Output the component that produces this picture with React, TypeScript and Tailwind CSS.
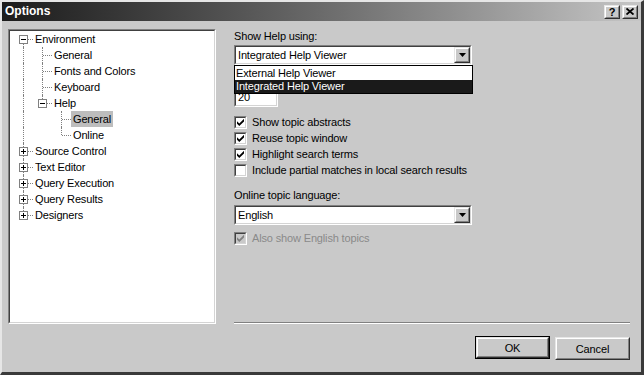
import React from "react";

type Row = {
  label: string;
  guides: ("line" | "none")[];
  conn: "first" | "tee" | "corner";
  box?: "+" | "-";
  selected?: boolean;
};

const rows: Row[] = [
  { label: "Environment", guides: [], conn: "first", box: "-" },
  { label: "General", guides: ["line"], conn: "tee" },
  { label: "Fonts and Colors", guides: ["line"], conn: "tee" },
  { label: "Keyboard", guides: ["line"], conn: "tee" },
  { label: "Help", guides: ["line"], conn: "corner", box: "-" },
  { label: "General", guides: ["line", "none"], conn: "tee", selected: true },
  { label: "Online", guides: ["line", "none"], conn: "corner" },
  { label: "Source Control", guides: [], conn: "tee", box: "+" },
  { label: "Text Editor", guides: [], conn: "tee", box: "+" },
  { label: "Query Execution", guides: [], conn: "tee", box: "+" },
  { label: "Query Results", guides: [], conn: "tee", box: "+" },
  { label: "Designers", guides: [], conn: "corner", box: "+" },
];

function ExpandBox({ kind }: { kind: "+" | "-" }) {
  return (
    <div className="absolute left-[5px] top-[4px] w-[9px] h-[9px] bg-white border border-[#808080] flex items-center justify-center">
      <div className="relative w-[5px] h-[5px]">
        <div className="absolute left-0 top-[2px] w-[5px] h-[1px] bg-black" />
        {kind === "+" && <div className="absolute left-[2px] top-0 w-[1px] h-[5px] bg-black" />}
      </div>
    </div>
  );
}

function TreeRow({ row }: { row: Row }) {
  return (
    <div className="flex h-[16px] items-center">
      {row.guides.map((g, i) => (
        <div key={i} className="relative w-[19px] h-[16px] shrink-0">
          {g === "line" && (
            <div className="absolute left-[9px] top-0 bottom-0 border-l border-dotted border-[#808080]" />
          )}
        </div>
      ))}
      <div className="relative w-[19px] h-[16px] shrink-0">
        {row.conn === "tee" && (
          <div className="absolute left-[9px] top-0 bottom-0 border-l border-dotted border-[#808080]" />
        )}
        {row.conn === "first" && (
          <div className="absolute left-[9px] top-[8px] bottom-0 border-l border-dotted border-[#808080]" />
        )}
        {row.conn === "corner" && (
          <div className="absolute left-[9px] top-0 h-[8px] border-l border-dotted border-[#808080]" />
        )}
        <div className="absolute left-[10px] right-0 top-[8px] border-t border-dotted border-[#808080]" />
        {row.box && <ExpandBox kind={row.box} />}
      </div>
      <div
        className={`h-[16px] leading-[16px] px-[2px] whitespace-nowrap ${row.selected ? "bg-[#bdbdbd]" : ""}`}
      >
        {row.label}
      </div>
    </div>
  );
}

function Sunken({ className, inner, children }: { className: string; inner: string; children?: React.ReactNode }) {
  return (
    <div className={`border border-t-[#808080] border-l-[#808080] border-b-white border-r-white ${className}`}>
      <div className={`w-full h-full border border-t-[#404040] border-l-[#404040] border-b-[#d4d4d4] border-r-[#d4d4d4] ${inner}`}>
        {children}
      </div>
    </div>
  );
}

function Raised({ className, children }: { className: string; children?: React.ReactNode }) {
  return (
    <div className={`border border-t-[#e6e6e6] border-l-[#e6e6e6] border-b-[#303030] border-r-[#303030] bg-[#c9c9c9] ${className}`}>
      <div className="w-full h-full border border-t-white border-l-white border-b-[#808080] border-r-[#808080] flex items-center justify-center">
        {children}
      </div>
    </div>
  );
}

function Arrow() {
  return (
    <svg width="7" height="4" viewBox="0 0 7 4">
      <path d="M0 0H7L3.5 4Z" fill="#000" />
    </svg>
  );
}

function Combo({ value }: { value: string }) {
  return (
    <Sunken className="w-[238px] h-[20px]" inner="bg-white flex items-center">
      <div className="flex-1 pl-[2px] leading-[16px] whitespace-nowrap">{value}</div>
      <Raised className="w-[16px] h-[16px]">
        <Arrow />
      </Raised>
    </Sunken>
  );
}

function Check({ color }: { color: string }) {
  return (
    <svg width="7" height="7" viewBox="0 0 7 7">
      <path d="M0 2.2L2.3 4.5L7 -0.2V2.4L2.3 7L0 4.7Z" fill={color} />
    </svg>
  );
}

function CheckRow({ label, checked, disabled }: { label: string; checked: boolean; disabled?: boolean }) {
  return (
    <div className="flex items-center h-[16px]">
      <Sunken
        className="w-[13px] h-[13px] shrink-0"
        inner={`${disabled ? "bg-[#c9c9c9]" : "bg-white"} flex items-center justify-center`}
      >
        {checked && <Check color={disabled ? "#808080" : "#000"} />}
      </Sunken>
      <div className={`ml-[5px] whitespace-nowrap ${disabled ? "text-[#8a8a8a]" : ""}`}>{label}</div>
    </div>
  );
}

export default function App() {
  return (
    <div className="w-[644px] h-[375px] bg-[#c9c9c9] font-['Liberation_Sans',Arial,sans-serif] text-[11px] tracking-[-0.15px] text-black border-t-2 border-l-2 border-t-[#e6e6e6] border-l-[#e6e6e6] border-r-[3px] border-b-[3px] border-r-[#3a3a3a] border-b-[#3a3a3a] flex flex-col overflow-hidden">
      {/* Title bar */}
      <div className="h-[19px] shrink-0 flex items-center justify-between pl-[3px] pr-[3px] bg-linear-to-r from-[#1c1c1c] to-[#c6c6c6]">
        <div className="text-white font-bold text-[12px] tracking-normal leading-[19px]">Options</div>
        <div className="flex gap-[2px]">
          <Raised className="w-[16px] h-[14px]">
            <span className="font-bold text-[11px] leading-[10px]">?</span>
          </Raised>
          <Raised className="w-[16px] h-[14px]">
            <svg width="8" height="7" viewBox="0 0 8 7">
              <path d="M0.5 0.5L7.5 6.5M7.5 0.5L0.5 6.5" stroke="#000" strokeWidth="1.8" />
            </svg>
          </Raised>
        </div>
      </div>

      <div className="flex-1 flex flex-col pl-[6px] pr-[11px] pt-[8px]">
        <div className="flex h-[295px]">
          {/* Tree panel */}
          <Sunken className="w-[208px] h-[295px] shrink-0" inner="bg-white pl-[4px] pt-0">
            {rows.map((r, i) => (
              <TreeRow key={i} row={r} />
            ))}
          </Sunken>

          {/* Right column */}
          <div className="ml-[18px] flex-1 flex flex-col relative">
            <div className="h-[14px] leading-[14px]">Show Help using:</div>
            <div className="mt-[2px]">
              <Combo value="Integrated Help Viewer" />
            </div>
            <Sunken className="mt-[22px] w-[44px] h-[20px]" inner="bg-white flex items-center">
              <div className="pl-[2px] leading-[16px]">20</div>
            </Sunken>
            <div className="mt-[7px] flex flex-col">
              <CheckRow label="Show topic abstracts" checked />
              <CheckRow label="Reuse topic window" checked />
              <CheckRow label="Highlight search terms" checked />
              <CheckRow label="Include partial matches in local search results" checked={false} />
            </div>
            <div className="mt-[10px] h-[14px] leading-[14px]">Online topic language:</div>
            <div className="mt-[3px]">
              <Combo value="English" />
            </div>
            <div className="mt-[5px]">
              <CheckRow label="Also show English topics" checked disabled />
            </div>
            <div className="mt-auto h-[2px] border-t border-t-[#808080] border-b border-b-white" />

            {/* Dropdown list overlay */}
            <div className="absolute top-[36px] left-0 w-[239px] h-[29px] border border-black bg-white flex flex-col">
              <div className="h-[14px] leading-[14px] pl-[1px] whitespace-nowrap">External Help Viewer</div>
              <div className="h-[13px] leading-[13px] pl-[1px] whitespace-nowrap bg-[#1a1a1a] text-white">
                Integrated Help Viewer
              </div>
            </div>
          </div>
        </div>

        {/* Buttons */}
        <div className="mt-[12px] flex justify-end gap-[5px] items-start">
          <div className="w-[75px] h-[23px] border border-black">
            <Raised className="w-full h-full">
              <span className="leading-[14px]">OK</span>
            </Raised>
          </div>
          <Raised className="w-[75px] h-[23px] mt-[1px]">
            <span className="leading-[14px]">Cancel</span>
          </Raised>
        </div>
      </div>
    </div>
  );
}
